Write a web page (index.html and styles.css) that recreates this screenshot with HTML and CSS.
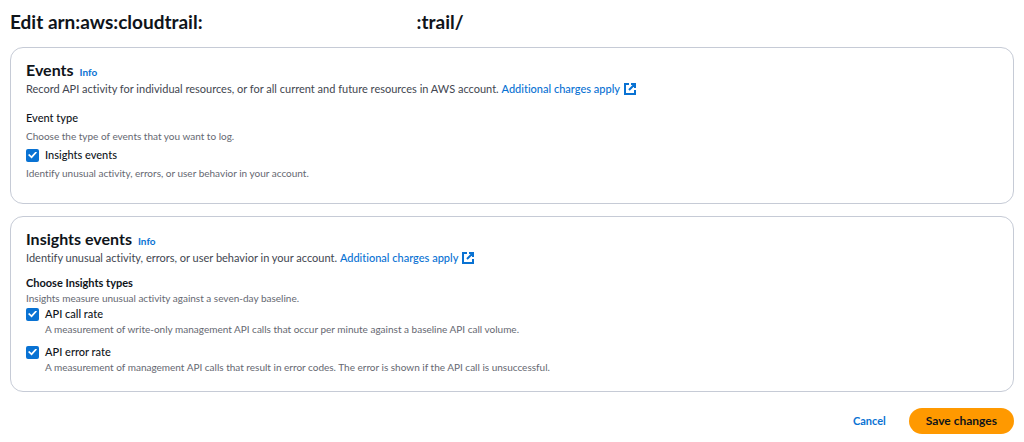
FILE: index.html
```html
<!DOCTYPE html>
<html lang="en">
<head>
<meta charset="utf-8">
<title>Edit trail</title>
<link rel="stylesheet" href="styles.css">
</head>
<body>
<main class="page">
  <h1 class="page-title"><span>Edit arn:aws:cloudtrail:</span><span>:trail/</span></h1>
  <form class="form">
    <section class="card">
      <header class="card-header">
        <h2 class="card-title">Events</h2>
        <a class="info" href="#">Info</a>
      </header>
      <p class="description">Record API activity for individual resources, or for all current and future resources in AWS account. <a class="link" href="#">Additional charges apply <svg class="external" viewBox="0 0 12 12" aria-hidden="true"><path d="M5 1H1v10h10V7M7 1h4v4M11 1 5 7"/></svg></a></p>
      <div class="field">
        <h3 class="field-label">Event type</h3>
        <p class="hint">Choose the type of events that you want to log.</p>
        <label class="option"><input class="checkbox" type="checkbox" checked aria-describedby="insights-hint">Insights events</label>
        <p class="hint" id="insights-hint">Identify unusual activity, errors, or user behavior in your account.</p>
      </div>
    </section>
    <section class="card">
      <header class="card-header">
        <h2 class="card-title">Insights events</h2>
        <a class="info" href="#">Info</a>
      </header>
      <p class="description">Identify unusual activity, errors, or user behavior in your account. <a class="link" href="#">Additional charges apply <svg class="external" viewBox="0 0 12 12" aria-hidden="true"><path d="M5 1H1v10h10V7M7 1h4v4M11 1 5 7"/></svg></a></p>
      <div class="types">
        <h3 class="types-label">Choose Insights types</h3>
        <p class="hint">Insights measure unusual activity against a seven-day baseline.</p>
        <div class="type">
          <label class="option"><input class="checkbox" type="checkbox" checked aria-describedby="call-hint">API call rate</label>
          <p class="hint type-hint" id="call-hint">A measurement of write-only management API calls that occur per minute against a baseline API call volume.</p>
        </div>
        <div class="type">
          <label class="option"><input class="checkbox" type="checkbox" checked aria-describedby="error-hint">API error rate</label>
          <p class="hint type-hint" id="error-hint">A measurement of management API calls that result in error codes. The error is shown if the API call is unsuccessful.</p>
        </div>
      </div>
    </section>
    <div class="actions">
      <button class="cancel" type="button">Cancel</button>
      <button class="save" type="button">Save changes</button>
    </div>
  </form>
</main>
</body>
</html>
```
FILE: styles.css
```css
* { box-sizing: border-box; }
body {
  margin: 0;
  background: #fff;
  color: #0f141a;
  font-family: Lato, "Noto Sans", sans-serif;
  font-size: 11px;
  font-variant-ligatures: none;
  line-height: 16px;
}
h1, h2, h3, p { margin: 0; }
a { color: #0972d3; text-decoration: none; }
.page { padding: 10px 10px 8px; }
.page-title {
  display: flex;
  gap: 214px;
  font-size: 19px;
  line-height: 24px;
}
.form {
  display: flex;
  flex-direction: column;
  gap: 12px;
  margin-top: 13px;
}
.card {
  padding: 12px 15px 16px;
  border: 1px solid #c6cbd6;
  border-radius: 13px;
}
.card-header { display: flex; align-items: baseline; gap: 6px; }
.card-title { font-size: 16px; line-height: 20px; }
.info { font-size: 10px; font-weight: 700; }
.description { margin-top: 1px; color: #424650; }
.link { font-weight: 500; }
.external {
  width: 12px;
  height: 12px;
  margin-left: 1px;
  vertical-align: -2px;
  fill: none;
  stroke: #0972d3;
  stroke-width: 2;
}
.field {
  display: flex;
  flex-direction: column;
  gap: 3px;
  margin-top: 13px;
  padding-bottom: 6px;
}
.field-label { font-size: 11px; font-weight: 500; }
.hint { color: #656871; font-size: 10px; line-height: 15px; }
.option { display: flex; align-items: center; gap: 6px; font-weight: 500; }
.checkbox {
  appearance: none;
  width: 13px;
  height: 13px;
  margin: 0;
  border-radius: 2px;
  background: #0972d3;
  display: grid;
  place-items: center;
}
.checkbox::before {
  content: "";
  width: 9px;
  height: 7px;
  background: #fff;
  clip-path: polygon(0 50%, 15% 35%, 38% 65%, 85% 0, 100% 15%, 40% 100%);
}
.types { margin-top: 9px; }
.types-label { font-size: 11px; line-height: 16px; }
.type-hint { padding-left: 19px; }
.type + .type { margin-top: 7px; }
.actions { display: flex; justify-content: flex-end; gap: 6px; margin-top: 4px; }
.cancel, .save {
  border: 0;
  border-radius: 13px;
  padding: 4px 17px;
  font: inherit;
  font-size: 12px;
  font-weight: 700;
  line-height: 18px;
}
.cancel { background: transparent; color: #0972d3; font-size: 11px; }
.save { background: #f90; color: #0f141a; }
```
